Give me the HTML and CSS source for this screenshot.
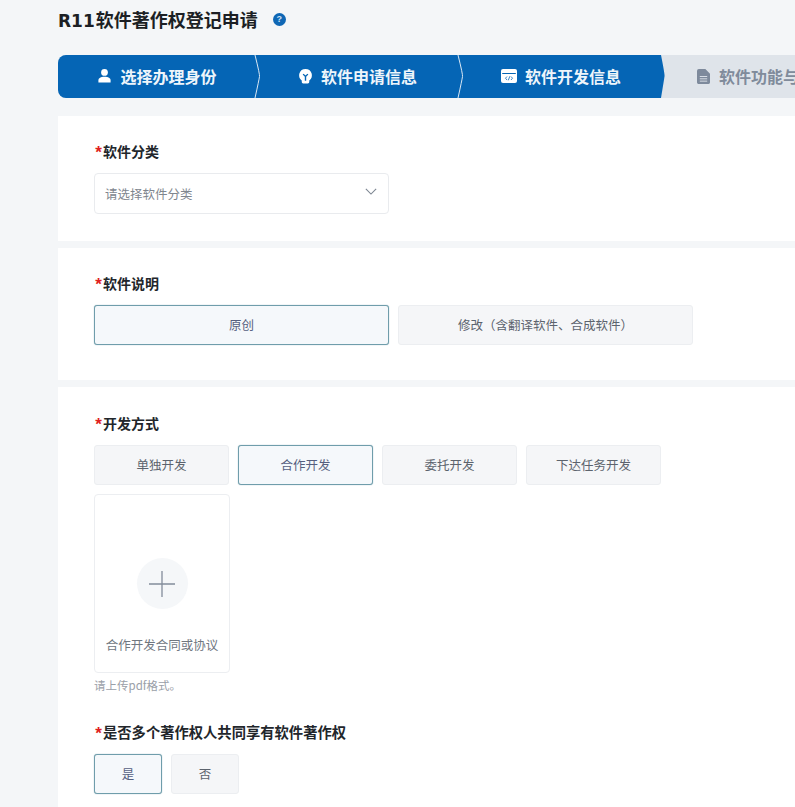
FILE: index.html
```html
<!DOCTYPE html>
<html lang="zh-CN">
<head>
<meta charset="utf-8">
<title>R11软件著作权登记申请</title>
<link rel="stylesheet" href="styles.css">
</head>
<body>
<main class="page">
  <header class="title-row">
    <h1 class="title"><span class="title-code">R11</span>软件著作权登记申请</h1>
    <span class="help">?</span>
  </header>

  <nav class="stepper">
    <div class="step step-one active">
      <svg class="step-icon" viewBox="0 0 16 16"><circle cx="8" cy="4.2" r="3.6" fill="#fff"/><path d="M1.500 15v-2.200C1.500 10 4 8.800 8 8.800s6.500 1.200 6.500 4V15z" fill="#fff"/></svg>
      <span>选择办理身份</span>
      <svg class="sep" viewBox="0 0 8 43" preserveAspectRatio="none"><path d="M1 0q5 20 4.500 21.500Q5 25 1 43" fill="none" stroke="#dbe8f4" stroke-width="1"/></svg>
    </div>
    <div class="step step-two active">
      <svg class="step-icon" viewBox="0 0 16 16"><path d="M8 .5a6.800 6.800 0 0 0-4 12.300V14.500a1.500 1.500 0 0 0 1.500 1.500h5a1.500 1.500 0 0 0 1.500-1.500v-1.700A6.800 6.800 0 0 0 8 .5z" fill="#fff"/><path d="M5.500 6l2.500 2.500L10.500 6M8 8.500V13" fill="none" stroke="#0565b5" stroke-width="1.500"/></svg>
      <span>软件申请信息</span>
      <svg class="sep" viewBox="0 0 8 43" preserveAspectRatio="none"><path d="M1 0q5 20 4.500 21.500Q5 25 1 43" fill="none" stroke="#dbe8f4" stroke-width="1"/></svg>
    </div>
    <div class="step step-three active">
      <svg class="step-icon code-icon" viewBox="0 0 16 14"><rect width="16" height="14" rx="2" fill="#fff"/><rect x="1.200" y="4" width="13.600" height="1" fill="#0565b5"/><path d="M6 7.500L4.500 9.200 6 11M10 7.500l1.500 1.700L10 11M8.800 7.300l-1.500 4" fill="none" stroke="#0565b5" stroke-width=".8"/></svg>
      <span>软件开发信息</span>
      <svg class="tip" viewBox="0 0 6 43" preserveAspectRatio="none"><path d="M0 0h1q4 20 3.500 21.500Q4 25 1 43H0z" fill="#0565b5"/></svg>
    </div>
    <div class="step step-four">
      <svg class="step-icon doc-icon" viewBox="0 0 14 16"><path d="M2 0h7l5 5v9.500a1.500 1.500 0 0 1-1.500 1.500h-11A1.500 1.500 0 0 1 0 14.500V2a2 2 0 0 1 2-2z" fill="#7e8a9c"/><path d="M3 8h8M3 10.500h8M3 13h8" stroke="#dfe4ea" stroke-width="1"/></svg>
      <span>软件功能与特点</span>
    </div>
  </nav>

  <section class="card card-category">
    <div class="label"><i class="star">*</i>软件分类</div>
    <div class="select">
      <span>请选择软件分类</span>
      <svg class="chevron" viewBox="0 0 14 8"><path d="M1 1l6 6 6-6" fill="none" stroke="#7d8692" stroke-width="1.300"/></svg>
    </div>
  </section>

  <section class="card card-desc">
    <div class="label"><i class="star">*</i>软件说明</div>
    <div class="options">
      <button class="option wide selected">原创</button>
      <button class="option wide">修改（含翻译软件、合成软件）</button>
    </div>
  </section>

  <section class="card card-method">
    <div class="label"><i class="star">*</i>开发方式</div>
    <div class="options">
      <button class="option mid">单独开发</button>
      <button class="option mid selected">合作开发</button>
      <button class="option mid">委托开发</button>
      <button class="option mid">下达任务开发</button>
    </div>
    <div class="upload">
      <div class="plus">
        <svg viewBox="0 0 28 28"><path d="M14 1v26M1 14h26" stroke="#838d9b" stroke-width="1.300"/></svg>
      </div>
      <div class="upload-text">合作开发合同或协议</div>
    </div>
    <div class="hint">请上传pdf格式。</div>
    <div class="label second"><i class="star">*</i>是否多个著作权人共同享有软件著作权</div>
    <div class="options">
      <button class="option small selected">是</button>
      <button class="option small">否</button>
    </div>
  </section>
</main>
</body>
</html>
```
FILE: styles.css
```css
* { box-sizing: border-box; }
html, body { margin: 0; height: 100%; overflow: hidden; }
body {
  background: #f4f6f8;
  font-family: "Noto Sans CJK SC", "Noto Sans", sans-serif;
  color: #1d2129;
}
.page { width: 795px; height: 807px; padding-left: 58px; overflow: hidden; }

.title-row { display: flex; align-items: center; height: 40px; gap: 15px; }
.title { margin: 0; font-size: 18px; line-height: 40px; font-weight: 700; color: #1c1f24; white-space: nowrap; }
.title-code { font-family: "DejaVu Sans", sans-serif; font-size: 17px; margin-right: 1px; }
.help {
  width: 13px; height: 13px; border-radius: 50%; margin-top: -2px;
  background: #0f67b5; color: #cfe3f5;
  display: flex; align-items: center; justify-content: center;
  font: 700 9px/13px "Liberation Sans", sans-serif;
}

.stepper {
  display: flex; width: 780px; height: 43px; margin-top: 15px;
  background: #dfe4ea; border-radius: 8px 0 0 8px; overflow: hidden;
}
.step {
  position: relative; flex: none; height: 43px; padding-bottom: 1px;
  display: flex; align-items: center; justify-content: center; gap: 8px;
  font-size: 16px; font-weight: 700; white-space: nowrap;
}
.step.active { background: #0565b5; color: #eef5fb; }
.step-one { width: 198px; }
.step-two { width: 203px; }
.step-three { width: 202px; padding-left: 2px; }
.step-four { width: 177px; padding-left: 33px; justify-content: flex-start; color: #808b9b; gap: 9px; margin-left: 3px; }
.step-icon { width: 15px; height: 16px; flex: none; }
.code-icon { height: 14px; width: 16px; }
.doc-icon { width: 13px; height: 15px; }
.sep { position: absolute; right: -6px; top: 0; width: 8px; height: 43px; z-index: 2; }
.tip { position: absolute; right: -5px; top: 0; width: 6px; height: 43px; z-index: 2; }

.card { background: #fff; padding-left: 36px; width: 737px; margin-bottom: 7px; }
.card-category { margin-top: 18px; height: 125px; padding-top: 25px; }
.card-desc { height: 132px; padding-top: 25px; }
.card-method { height: 430px; padding-top: 26px; margin-bottom: 0; }

.label { font-size: 14px; line-height: 20px; font-weight: 700; color: #22262b; white-space: nowrap; }
.label.second { margin-top: 29px; font-size: 14.300px; }
.star {
  display: inline-block; width: 9px; height: 10px; line-height: 0; text-align: center; vertical-align: -1px;
  color: #e02020; font-style: normal; font-weight: 700;
  font-family: "Liberation Sans", sans-serif; font-size: 17px;
}

.select {
  display: flex; align-items: center; justify-content: space-between;
  width: 295px; height: 41px; margin-top: 10px; padding: 0 11px 0 10px;
  border: 1px solid #e9ebee; border-radius: 4px; background: #fff;
  font-size: 12.500px; color: #80868e;
}
.chevron { width: 12px; height: 7px; margin-top: -4px; }

.options { display: flex; gap: 9px; margin-top: 10px; }
.option {
  height: 40px; padding: 0; background: #f5f6f8;
  border: 1px solid #eceef1; border-radius: 3px;
  font: 12.500px/1 "Noto Sans CJK SC", "Noto Sans", sans-serif; color: #5c636d;
  white-space: nowrap;
}
.option.selected { background: #f5f8fb; border: 1px solid #6f9dab; box-shadow: 0 0 1px #6f9dab; color: #565f7f; }
.option.wide { width: 295px; }
.option.mid { width: 135px; }
.option.small { width: 68px; }

.upload {
  width: 136px; height: 179px; margin-top: 9px;
  border: 1px solid #eceef1; border-radius: 4px; background: #fff;
  display: flex; flex-direction: column; align-items: center;
}
.plus {
  width: 51px; height: 51px; margin-top: 63px; border-radius: 50%;
  background: #f5f7f9; display: flex; align-items: center; justify-content: center;
}
.plus svg { width: 28px; height: 28px; }
.upload-text { margin-top: 28px; font-size: 12.500px; line-height: 16px; color: #70777f; white-space: nowrap; }
.hint { margin-top: 5px; font-size: 11.500px; line-height: 15px; color: #9aa0a8; }
```
